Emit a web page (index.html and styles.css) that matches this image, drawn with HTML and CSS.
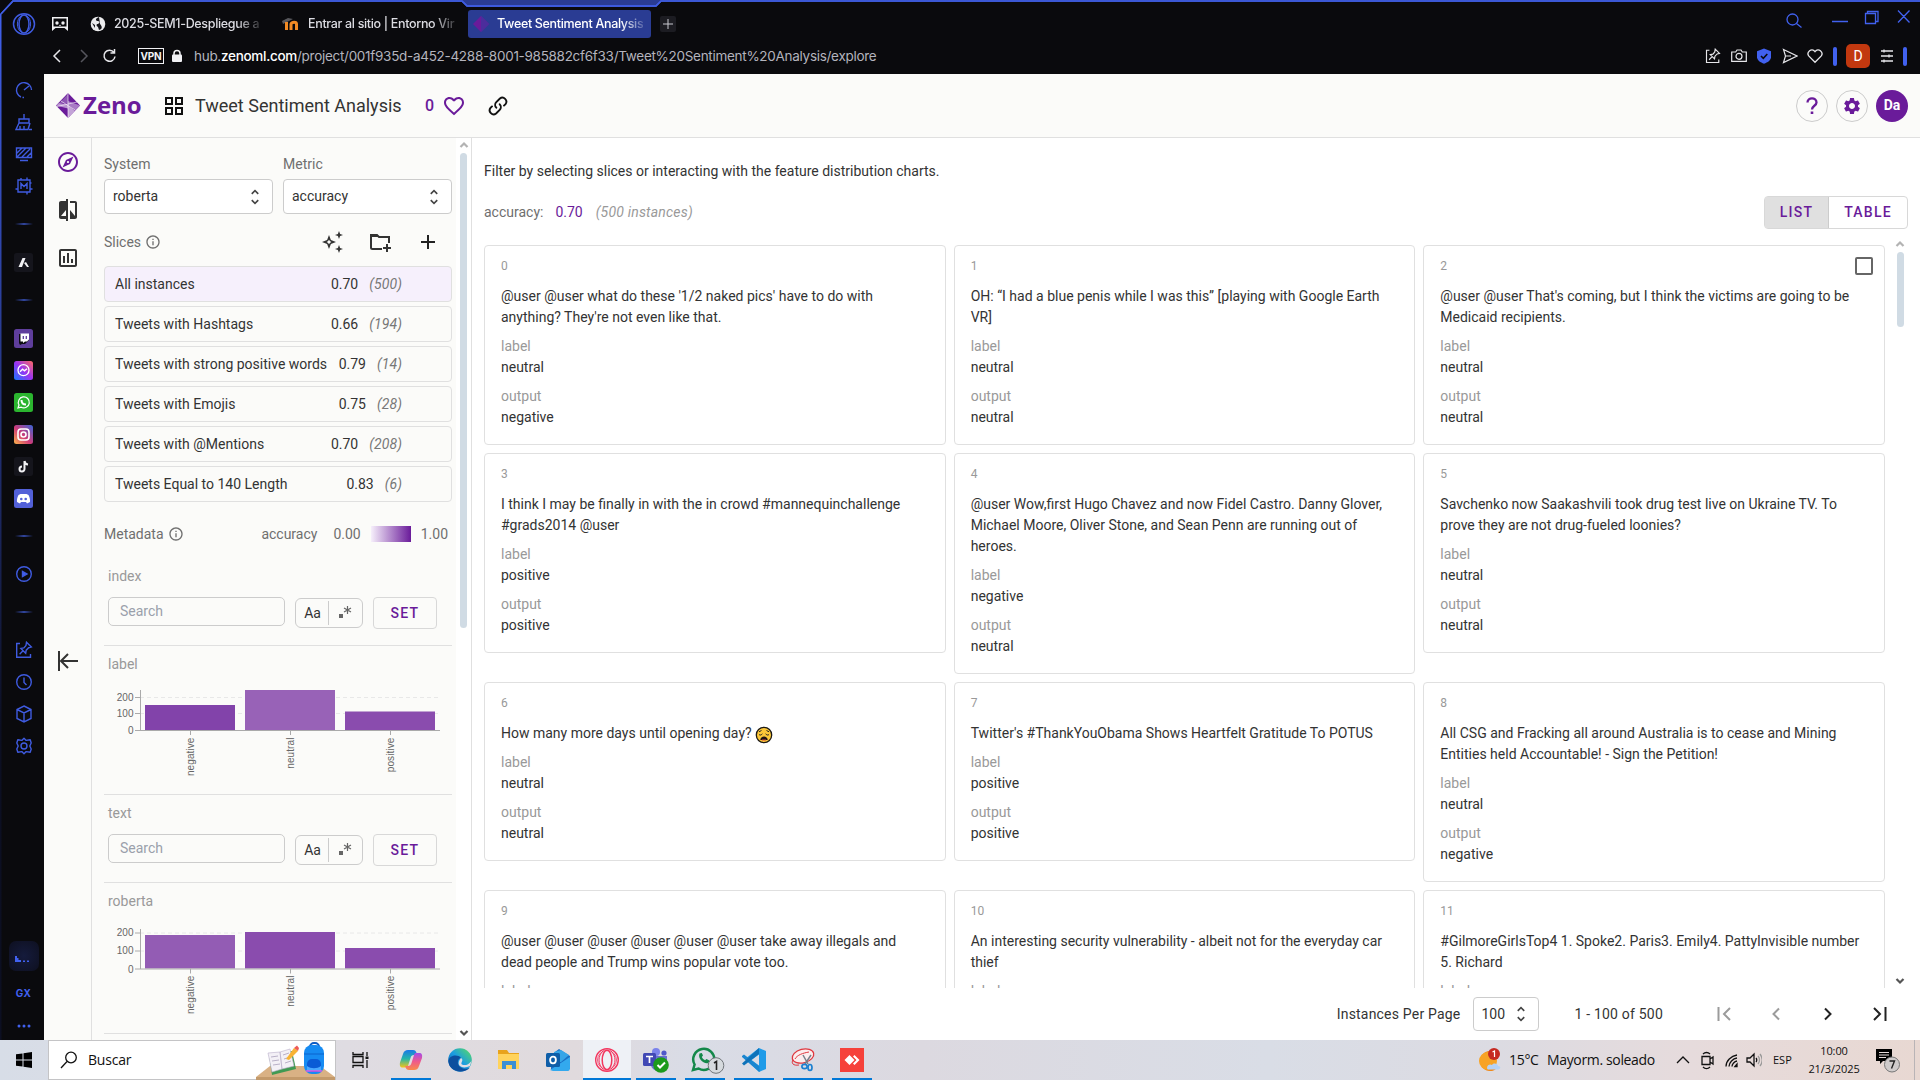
FILE: index.html
```html
<!DOCTYPE html>
<html lang="en">
<head>
<meta charset="utf-8">
<title>Tweet Sentiment Analysis</title>
<link rel="stylesheet" href="styles.css">
</head>
<body>
<svg width="0" height="0" class="defs">
  <defs>
    <symbol id="unfold" viewBox="0 0 24 24"><path d="M12 5.83L15.17 9l1.41-1.41L12 3 7.41 7.59 8.83 9 12 5.83zm0 12.34L8.83 15l-1.41 1.41L12 21l4.59-4.59L15.17 15 12 18.17z"/></symbol>
    <symbol id="info" viewBox="0 0 24 24"><path d="M11 7h2v2h-2zm0 4h2v6h-2zm1-9C6.48 2 2 6.48 2 12s4.48 10 10 10 10-4.48 10-10S17.52 2 12 2zm0 18c-4.41 0-8-3.59-8-8s3.59-8 8-8 8 3.59 8 8-3.59 8-8 8z"/></symbol>
    <symbol id="heart" viewBox="0 0 24 24"><path d="M16.5 3c-1.74 0-3.41.81-4.5 2.09C10.91 3.81 9.24 3 7.5 3 4.42 3 2 5.42 2 8.5c0 3.78 3.4 6.86 8.55 11.54L12 21.35l1.45-1.32C18.6 15.36 22 12.28 22 8.5 22 5.42 19.58 3 16.5 3zm-4.4 15.55l-.1.1-.1-.1C7.14 14.24 4 11.39 4 8.5 4 6.5 5.5 5 7.5 5c1.54 0 3.04.99 3.57 2.36h1.87C13.46 5.99 14.96 5 16.5 5c2 0 3.5 1.5 3.5 3.5 0 2.89-3.14 5.74-7.9 10.05z"/></symbol>
    <symbol id="pin" viewBox="0 0 18 18"><path d="M5 2.5H1.7v13.8h13.8V13M11.5 1.2l4.8 4.8-2.6.7-2.5 2.5-.5 3L5.9 7.4l3-.5 2.1-2.5zM8 9.8l-3.4 3.4"/></symbol>
    <linearGradient id="frame" x1="0" y1="0" x2="0" y2="1"><stop offset="0" stop-color="#4161ef"/><stop offset=".7" stop-color="#0c0f22"/></linearGradient>
    <linearGradient id="insta" x1="0" y1="1" x2="1" y2="0"><stop offset="0" stop-color="#fdb54a"/><stop offset=".45" stop-color="#d13b77"/><stop offset="1" stop-color="#3864d8"/></linearGradient>
    <linearGradient id="msgr" x1="0" y1="1" x2="1" y2="0"><stop offset="0" stop-color="#1878ff"/><stop offset=".5" stop-color="#9a33f2"/><stop offset="1" stop-color="#ff6a62"/></linearGradient>
    <linearGradient id="copA" x1="0" y1="0" x2="0" y2="1"><stop offset="0" stop-color="#1a78e8"/><stop offset=".5" stop-color="#25b6a8"/><stop offset="1" stop-color="#f5c518"/></linearGradient>
    <linearGradient id="copB" x1="0" y1="0" x2="0" y2="1"><stop offset="0" stop-color="#a64be8"/><stop offset=".5" stop-color="#ee5a8c"/><stop offset="1" stop-color="#f98a4a"/></linearGradient>
    <linearGradient id="edge" x1="0" y1="1" x2="1" y2="0"><stop offset="0" stop-color="#0c59a4"/><stop offset=".5" stop-color="#1b9de2"/><stop offset="1" stop-color="#5be05c"/></linearGradient>
  </defs>
</svg>

<div class="browser">
  <svg class="frame" width="1920" height="1040" fill="none">
    <path d="M462 0l6 7h187l6-7z" fill="#2a3c93"/>
    <path d="M.7 1040V14L13 1h449l5 5h189l5-5h1260" stroke="url(#frame)" stroke-width="1.6"/>
    <path d="M0 0h12L0 14z" fill="#0a0a0d"/>
    <path d="M1 14L13 1h449l5 5h189l5-5h1260" stroke="#3f5ce0" stroke-width="1.6"/>
  </svg>
  <div class="tabbar">
    <svg class="opera" width="24" height="24" fill="none" stroke="#3f5be0" stroke-width="1.5"><ellipse cx="12" cy="12" rx="10.5" ry="10.2"/><ellipse cx="12" cy="12" rx="5" ry="9"/><path d="M9.5 3.500C4 7 4 17 9.500 20.500M14.500 3.500C20 7 20 17 14.500 20.500" stroke-width="1"/></svg>
    <svg class="pinned" width="18" height="14" fill="#f1f1f4"><path fill-rule="evenodd" d="M1 0h16v14l-3.500-3h-9L1 14zm1.500 1.500V9.500h13v-8z"/><circle cx="6" cy="6" r="1.700"/><circle cx="12" cy="6" r="1.700"/><path d="M8 9l1-1.500L10 9z"/></svg>
    <div class="tab tab-one"><svg width="16" height="16"><circle cx="8" cy="8" r="7.300" fill="#ececee"/><path d="M9 1c-3 1-4 3-2 4 3 0 3 2 1 3-2 0-2 2 0 3l1 3c4-1 3-4 1-6M2 7l3 2v3z" fill="#15151a"/></svg><span>2025-SEM1-Despliegue a</span></div>
    <div class="tab tab-two"><svg width="18" height="16" fill="none"><path d="M0 5l6-3 5 1-6 3-4 2z" fill="#57575c"/><path d="M4.500 14V6M9 14V8c1-2.500 5.500-2.500 5.500 0v6" stroke="#f28a24" stroke-width="3"/></svg><span>Entrar al sitio | Entorno Vir</span></div>
    <div class="tab tab-active"><svg width="16" height="16"><path d="M8 0l8 8-8 8-8-8z" fill="#6a1b9a"/><path d="M8 0v16l8-8z" fill="#4c2d9c"/></svg><span>Tweet Sentiment Analysis</span></div>
    <div class="newtab"><svg width="10" height="10" stroke="#c8c8d0"><path d="M5 0v10M0 5h10"/></svg></div>
    <svg class="winctl" width="130" height="36" fill="none" stroke="#4161ef" stroke-width="1.300"><circle cx="12.500" cy="18.500" r="5.500"/><path d="M16.500 22.500l5 4M52 20.500h16"/><path d="M85.500 12.500h10v10h-10zM87.500 12.500v-2h10.500v10h-2.500M118 9.500l11.500 12M129.500 9.500l-11.500 12" /></svg>
  </div>
  <div class="address">
    <svg width="82" height="20" fill="none" stroke="#e6e6ea" stroke-width="1.500"><path d="M12 4L6 10l6 6"/><path d="M33 4l6 6-6 6" stroke="#55555d"/><path d="M66 6.500a5.500 5.500 0 1 0 1 4M66.500 3v4h-4"/></svg>
    <span class="vpn">VPN</span>
    <svg class="lock" width="12" height="14"><path d="M3 6V4.500a3 3 0 0 1 6 0V6" fill="none" stroke="#f1f1f4" stroke-width="1.500"/><rect x="1" y="5.500" width="10" height="7.500" rx="1" fill="#f1f1f4"/></svg>
    <span class="url">hub.<b>zenoml.com</b>/project/001f935d-a452-4288-8001-985882cf6f33/Tweet%20Sentiment%20Analysis/explore</span>
    <div class="address-tools">
      <svg width="16" height="16" viewBox="0 0 18 18" fill="none" stroke="#e6e6ea" stroke-width="1.300"><use href="#pin"/></svg>
      <svg width="16" height="16" fill="none" stroke="#e6e6ea" stroke-width="1.200"><path d="M.7 4h4l1.300-2h4l1.300 2h4v9.300H.7z"/><circle cx="8" cy="8.300" r="3"/></svg>
      <svg width="16" height="16"><path d="M8 .5l7 2.800v6c0 3-3.500 5.200-7 6.500-3.500-1.300-7-3.500-7-6.500v-6z" fill="#4161ef"/><path d="M5 8l2.300 2.300L11.300 6" stroke="#0a0a0d" stroke-width="1.600" fill="none"/></svg>
      <svg width="16" height="16" fill="none" stroke="#e6e6ea" stroke-width="1.200"><path d="M1.500 1.500L15 8 1.500 14.500 3.500 8zM3.500 8H9"/></svg>
      <svg width="16" height="16" fill="none" stroke="#e6e6ea" stroke-width="1.300"><path d="M8 14.300L1.700 7.900C-.8 4.500 4.500-.8 8 3.600c3.500-4.400 8.800.9 6.300 4.300z"/></svg>
      <i class="bar"></i><span class="profile">D</span>
      <svg width="14" height="16" fill="none" stroke="#e6e6ea" stroke-width="1.300"><path d="M1 3h12M1 8h12M1 13h12M4 1.500v3M9 6.500v3M4 11.500v3"/></svg>
      <i class="bar"></i>
    </div>
  </div>

  <div class="body">
    <div class="opera-side">
      <div class="si"><svg width="18" height="18"><path d="M6 16A7.500 7.500 0 1 1 16.500 9M9 9l5-4M9 16.500h-1.500"/></svg></div>
      <div class="si"><svg width="18" height="18"><path d="M9 1v5M4 6h10v4H4zM4 10l-3 6.500h12l2-6.500M5 13v3M9 13v3M14 16.500h3"/></svg></div>
      <div class="si"><svg width="18" height="18"><path d="M1.500 3h15v9.500h-15zM5 15.500h8M2 8l5-5M2 12l9-9M7 12l8-8M12 12l4-4"/></svg></div>
      <div class="si"><svg width="18" height="18"><path d="M3 3h12v12H3zM6 3V1M12 3V.5M12 15v2.500M3 12H.5M15 6h1.500M15 12h2.500M6 12V6.500l3 3 3-3V12"/></svg></div>
      <div class="dash"><i></i></div>
      <div class="si"><b class="app dark"><svg width="19" height="19" fill="#f1f1f4"><path d="M8.500 5h3L8 14H4.500zM10 10l2-1 3 5h-2z"/></svg></b></div>
      <div class="dash"><i></i></div>
      <div class="si"><b class="app twitch"><svg width="19" height="19"><path d="M5 5h10v6l-4 4H8l-2 1-1-2z" fill="#0d0d12"/><path d="M6.500 4.500h8.500v6l-2 2h-2l-2 1.500v-1.500H6.500z" fill="#fff"/><path d="M9.300 7v3M12.300 7v3" stroke="#5f3e9c" stroke-width="1.300"/></svg></b></div>
      <div class="si"><b class="app"><svg width="19" height="19"><rect width="19" height="19" rx="2.500" fill="url(#msgr)"/><circle cx="9.500" cy="9.200" r="5.500" fill="none" stroke="#fff" stroke-width="1.300"/><path d="M6 10.700l2.500-2.500 2 1.600L13 7.700" stroke="#fff" fill="none" stroke-width="1.400"/></svg></b></div>
      <div class="si"><b class="app whatsapp"><svg width="19" height="19" fill="none" stroke="#fff" stroke-width="1.200"><path d="M4 15l1-3a5.500 5.500 0 1 1 2.200 2.200z"/><path d="M7.500 7c0 3 1.800 4.600 4.500 4.600" stroke-width="2"/></svg></b></div>
      <div class="si"><b class="app"><svg width="19" height="19" fill="none" stroke="#fff" stroke-width="1.600"><rect width="19" height="19" rx="2.500" fill="url(#insta)" stroke="none"/><rect x="4" y="4" width="11" height="11" rx="3"/><circle cx="9.500" cy="9.500" r="2.500"/></svg></b></div>
      <div class="si"><b class="app dark"><svg width="19" height="19" fill="none" stroke="#f1f1f4" stroke-width="2"><path d="M10.500 4v8a2.500 2.500 0 1 1-2.500-2.500M10.500 4c.3 2 1.500 3.300 3.500 3.500"/></svg></b></div>
      <div class="si"><b class="app discord"><svg width="19" height="19"><path d="M6.500 5h6l2 1c1.500 3 1.700 5 1.500 7l-3 1.500-1-1.500H7l-1 1.500L3 13c-.2-2 0-4 1.500-7z" fill="#fff"/><circle cx="7.300" cy="10" r="1.300" fill="#5260d8"/><circle cx="11.700" cy="10" r="1.300" fill="#5260d8"/></svg></b></div>
      <div class="dash"><i></i></div>
      <div class="si"><svg width="18" height="18"><circle cx="9" cy="9" r="7.300"/><path d="M7.500 6.500v5L12 9z" fill="#4161ef"/></svg></div>
      <div class="dash"><i></i></div>
      <div class="si"><svg width="18" height="18"><use href="#pin"/></svg></div>
      <div class="si"><svg width="18" height="18"><circle cx="9" cy="9" r="7.300"/><path d="M9 4.500v5l2.500 2.500"/></svg></div>
      <div class="si"><svg width="18" height="18"><path d="M9 1l7 3.500v9L9 17l-7-3.500v-9zM2 4.500L9 8l7-3.500M9 8v9"/></svg></div>
      <div class="si"><svg width="18" height="18"><path d="M6.800 3.400L9 1.200l2.200 2.200 4-.6 1 3.200-1.400 3 1.400 3-1 3.200-4-.6L9 16.800l-2.200-2.200-4 .6-1-3.200 1.400-3-1.400-3 1-3.200z" stroke-linejoin="round"/><circle cx="9" cy="9" r="3"/></svg></div>
      <div class="side-foot">
        <div class="glow"><svg width="18" height="18"><path d="M0 9h2v2h1.500v2H6v2H0zM8 13.500h2V15H8zM12 13.500h2V15h-2z" fill="#4161ef" stroke="none"/></svg></div>
        <span class="gx">GX</span>
        <svg width="16" height="6"><g fill="#4161ef" stroke="none"><circle cx="3" cy="3" r="1.500"/><circle cx="8" cy="3" r="1.500"/><circle cx="13" cy="3" r="1.500"/></g></svg>
      </div>
    </div>

    <div class="app-root">
      <header class="top">
        <svg width="24" height="26" viewBox="0 0 24 26"><path d="M12 0l12 12.500L12 25 0 12.500z" fill="#6a1b9a"/><path d="M12 1L3 10.500h9z" fill="#8e55b4"/><path d="M12 12l-9-2-3 2.500 12 3z" fill="#b993d0"/><path d="M12 8l12 4.500-5 5L12 12z" fill="#a97bc5"/><path d="M12 25l7-7-7-6z" fill="#c3a3d7"/><path d="M12 0v25M1 13.500L21 9M5 8l14 9" stroke="#fff" stroke-width=".6"/></svg>
        <span class="brand">Zeno</span>
        <svg class="apps" width="18" height="18" fill="none" stroke="#111" stroke-width="2"><path d="M1 1h6v6H1zM11 1h6v6h-6zM1 11h6v6H1zM11 11h6v6h-6z"/></svg>
        <h1>Tweet Sentiment Analysis</h1>
        <span class="likes">0</span>
        <svg class="like" width="24" height="24" fill="#6a1b9a"><use href="#heart"/></svg>
        <svg class="link" width="20" height="20" fill="none" stroke="#111" stroke-width="1.900" stroke-linecap="round"><path d="M8.300 11.700a4 4 0 0 1 0-5.600l3.600-3.600a4 4 0 0 1 5.600 5.600l-1.500 1.500M11.700 8.300a4 4 0 0 1 0 5.600l-3.600 3.600a4 4 0 0 1-5.600-5.600L4 10.400"/></svg>
        <div class="top-actions">
          <span class="round"><svg width="14" height="20" fill="none" stroke="#6a1b9a" stroke-width="2.300"><path d="M2.500 6.500c0-5.500 9-5.500 9 0 0 3.300-4.500 3.300-4.500 7"/><path d="M7 15.500v2.500" stroke-width="2.600"/></svg></span>
          <span class="round"><svg width="20" height="20" viewBox="0 0 24 24" fill="#6a1b9a"><path d="M19.140 12.940c.04-.3.060-.61.060-.94 0-.32-.02-.64-.07-.94l2.030-1.580c.18-.14.230-.41.120-.61l-1.920-3.320c-.12-.22-.37-.29-.59-.22l-2.390.96c-.5-.38-1.030-.7-1.620-.94l-.36-2.540c-.04-.24-.24-.41-.48-.41h-3.840c-.24 0-.43.170-.47.410l-.36 2.540c-.59.240-1.130.57-1.620.94l-2.390-.96c-.22-.08-.47 0-.59.220L2.740 8.870c-.12.210-.08.470.12.610l2.030 1.580c-.05.3-.09.630-.09.940s.02.640.07.940l-2.030 1.580c-.18.140-.23.410-.12.610l1.920 3.320c.12.220.37.290.59.220l2.390-.96c.5.380 1.030.7 1.620.940l.36 2.540c.05.240.24.410.48.410h3.840c.24 0 .44-.17.470-.41l.36-2.540c.59-.24 1.130-.56 1.620-.94l2.390.96c.22.080.47 0 .59-.22l1.920-3.320c.12-.22.070-.47-.12-.61l-2.010-1.580zM12 15.600c-1.980 0-3.600-1.620-3.600-3.600s1.620-3.600 3.600-3.600 3.600 1.620 3.600 3.600-1.620 3.600-3.600 3.600z"/></svg></span>
          <span class="round user">Da</span>
        </div>
      </header>

      <div class="work">
        <nav class="rail">
          <svg width="24" height="24" fill="#6a1b9a"><path d="M12 2C6.480 2 2 6.480 2 12s4.480 10 10 10 10-4.480 10-10S17.520 2 12 2zm0 18c-4.410 0-8-3.590-8-8s3.590-8 8-8 8 3.590 8 8-3.590 8-8 8zm-5.500-2.500l7.510-3.490L17.500 6.500 9.990 9.990 6.500 17.500zm5.500-6.600c.61 0 1.100.49 1.100 1.100s-.49 1.100-1.100 1.100-1.100-.49-1.100-1.100.49-1.100 1.100-1.100z"/></svg>
          <svg width="24" height="24" fill="#333"><path d="M10 3H5c-1.100 0-2 .9-2 2v14c0 1.100.9 2 2 2h5v2h2V1h-2v2zm0 15H5l5-6v6zm9-15h-5v2h5v13l-5-6v9h5c1.100 0 2-.9 2-2V5c0-1.100-.9-2-2-2z"/></svg>
          <svg width="24" height="24" fill="#333"><path d="M9 17H7v-7h2v7zm4 0h-2V7h2v10zm4 0h-2v-4h2v4zm2 2H5V5h14v14zm0-16H5c-1.100 0-2 .9-2 2v14c0 1.100.9 2 2 2h14c1.100 0 2-.9 2-2V5c0-1.100-.9-2-2-2z"/></svg>
          <svg class="collapse" width="22" height="20" fill="none" stroke="#333" stroke-width="2"><path d="M2 0v20M21 10H4M11 3l-7 7 7 7"/></svg>
        </nav>

        <aside class="panel">
          <div class="selects">
            <label>System<span class="select">roberta<svg width="20" height="20"><use href="#unfold"/></svg></span></label>
            <label>Metric<span class="select">accuracy<svg width="20" height="20"><use href="#unfold"/></svg></span></label>
          </div>
          <div class="slices-head">
            <span>Slices</span><svg class="inf" width="16" height="16"><use href="#info"/></svg>
            <div class="slice-tools">
              <svg width="24" height="24" fill="#333"><path fill-rule="evenodd" d="M9 5l1.900 5.100 5.100 1.900-5.100 1.900L9 19l-1.900-5.100L2 12l5.100-1.900zm0 4.700l-.9 1.400-1.400.9 1.400.9.9 1.400.9-1.400 1.400-.9-1.400-.9zM19 1l1.100 2.900L23 5l-2.900 1.100L19 9l-1.100-2.900L15 5l2.900-1.100zM19 15l1.100 2.900L23 19l-2.900 1.100L19 23l-1.100-2.900L15 19l2.900-1.100z"/></svg>
              <svg width="24" height="24" fill="none" stroke="#333" stroke-width="2"><path d="M14 19H4.500C3.500 19 3 18.500 3 17.500V5h6l2 2h10v6M3 6h7M19 14v8M15 18h8"/></svg>
              <svg width="24" height="24" fill="none" stroke="#222" stroke-width="2"><path d="M12 5v14M5 12h14"/></svg>
            </div>
          </div>
          <ul class="slices">
            <li class="on"><span>All instances</span><b>0.70</b><i>(500)</i></li>
            <li><span>Tweets with Hashtags</span><b>0.66</b><i>(194)</i></li>
            <li><span>Tweets with strong positive words</span><b>0.79</b><i>(14)</i></li>
            <li><span>Tweets with Emojis</span><b>0.75</b><i>(28)</i></li>
            <li><span>Tweets with @Mentions</span><b>0.70</b><i>(208)</i></li>
            <li><span>Tweets Equal to 140 Length</span><b>0.83</b><i>(6)</i></li>
          </ul>
          <div class="meta-head"><span>Metadata</span><svg class="inf" width="16" height="16"><use href="#info"/></svg><span class="acc">accuracy</span><span class="lo">0.00</span><i class="ramp"></i><span>1.00</span></div>

          <section class="field field-search">
            <h2>index</h2>
            <div class="search-row"><span class="search">Search</span><span class="modes"><b>Aa</b><svg width="33" height="24"><path d="M10 13h4v4h-4z" fill="#666"/><path d="M18.500 5v8M15 7l7 4M22 7l-7 4" stroke="#666" stroke-width="1.200"/></svg></span><span class="set">SET</span></div>
          </section>
          <section class="field field-chart">
            <h2>label</h2>
            <svg class="chart" width="340" height="104">
              <path d="M36 17.500h300M36 33.500h300" class="grid"/>
              <path d="M41 25h90v25H41z" fill="#8243aa"/><path d="M141 10h90v40h-90z" fill="#9862b7"/><path d="M241 31.500h90V50h-90z" fill="#8a4cae"/>
              <path d="M36.500 10v40.500M31 17.500h5M31 33.500h5M31 50.500h305M86.500 50v5M186.500 50v5M286.500 50v5" class="axis"/>
              <g class="tick"><text x="29.500" y="20.500">200</text><text x="29.500" y="37">100</text><text x="29.500" y="54">0</text>
              <text class="cat" transform="translate(90 57.500)rotate(-90)">negative</text><text class="cat" transform="translate(190 57.500)rotate(-90)">neutral</text><text class="cat" transform="translate(290 57.500)rotate(-90)">positive</text></g>
            </svg>
          </section>
          <section class="field field-search">
            <h2>text</h2>
            <div class="search-row"><span class="search">Search</span><span class="modes"><b>Aa</b><svg width="33" height="24"><path d="M10 13h4v4h-4z" fill="#666"/><path d="M18.500 5v8M15 7l7 4M22 7l-7 4" stroke="#666" stroke-width="1.200"/></svg></span><span class="set">SET</span></div>
          </section>
          <section class="field field-chart">
            <h2>roberta</h2>
            <svg class="chart" width="340" height="104">
              <path d="M36 16h300M36 34h300" class="grid"/>
              <path d="M41 18h90v33.500H41z" fill="#935cb4"/><path d="M141 15h90v36.500h-90z" fill="#8a4cae"/><path d="M241 31h90v20.500h-90z" fill="#8a4cae"/>
              <path d="M36.500 12v40M31 16h5M31 34h5M31 52h305M86.500 51.500v5M186.500 51.500v5M286.500 51.500v5" class="axis"/>
              <g class="tick"><text x="29.500" y="19">200</text><text x="29.500" y="37">100</text><text x="29.500" y="56">0</text>
              <text class="cat" transform="translate(90 58.500)rotate(-90)">negative</text><text class="cat" transform="translate(190 58.500)rotate(-90)">neutral</text><text class="cat" transform="translate(290 58.500)rotate(-90)">positive</text></g>
            </svg>
          </section>
        </aside>
        <div class="scroll scroll-panel"><svg width="10" height="8" fill="none" stroke="#b3b3b3" stroke-width="2.200"><path d="M1.500 6L5 2.500 8.500 6"/></svg><i></i><svg width="10" height="8" fill="none" stroke="#555" stroke-width="2.200"><path d="M1.500 2L5 5.500 8.500 2"/></svg></div>

        <main class="main">
          <p class="hint">Filter by selecting slices or interacting with the feature distribution charts.</p>
          <div class="summary"><span>accuracy:</span><b>0.70</b><i>(500 instances)</i><div class="toggle"><span class="on">LIST</span><span>TABLE</span></div></div>
          <div class="list-wrap">
            <div class="cards">
              <article><h3>0</h3><p>@user @user what do these '1/2 naked pics' have to do with anything? They're not even like that.</p><dl><dt>label</dt><dd>neutral</dd><dt>output</dt><dd>negative</dd></dl></article>
              <article><h3>1</h3><p>OH: “I had a blue penis while I was this” [playing with Google Earth VR]</p><dl><dt>label</dt><dd>neutral</dd><dt>output</dt><dd>neutral</dd></dl></article>
              <article><h3>2<i class="check"></i></h3><p>@user @user That's coming, but I think the victims are going to be Medicaid recipients.</p><dl><dt>label</dt><dd>neutral</dd><dt>output</dt><dd>neutral</dd></dl></article>
              <article><h3>3</h3><p>I think I may be finally in with the in crowd #mannequinchallenge #grads2014 @user</p><dl><dt>label</dt><dd>positive</dd><dt>output</dt><dd>positive</dd></dl></article>
              <article><h3>4</h3><p>@user Wow,first Hugo Chavez and now Fidel Castro. Danny Glover, Michael Moore, Oliver Stone, and Sean Penn are running out of heroes.</p><dl><dt>label</dt><dd>negative</dd><dt>output</dt><dd>neutral</dd></dl></article>
              <article><h3>5</h3><p>Savchenko now Saakashvili took drug test live on Ukraine TV. To prove they are not drug-fueled loonies?</p><dl><dt>label</dt><dd>neutral</dd><dt>output</dt><dd>neutral</dd></dl></article>
              <article><h3>6</h3><p>How many more days until opening day? <svg class="emoji" width="18" height="18"><circle cx="9" cy="9" r="7.700" fill="#fcc838" stroke="#1d1a16" stroke-width="1.300"/><path d="M4 8.500c1 .8 2.500.8 3.300-.8M14 8.500c-1 .8-2.500.8-3.300-.8M4 5.800l2.500-1.300M14 5.800l-2.500-1.300" stroke="#222" fill="none"/><path d="M5.300 14c0-4.800 7.400-4.800 7.400 0z" fill="#1d1414"/><path d="M7 13.500h4v1H7z" fill="#d8453e"/></svg></p><dl><dt>label</dt><dd>neutral</dd><dt>output</dt><dd>neutral</dd></dl></article>
              <article><h3>7</h3><p>Twitter's #ThankYouObama Shows Heartfelt Gratitude To POTUS</p><dl><dt>label</dt><dd>positive</dd><dt>output</dt><dd>positive</dd></dl></article>
              <article><h3>8</h3><p>All CSG and Fracking all around Australia is to cease and Mining Entities held Accountable! - Sign the Petition!</p><dl><dt>label</dt><dd>neutral</dd><dt>output</dt><dd>negative</dd></dl></article>
              <article><h3>9</h3><p>@user @user @user @user @user @user take away illegals and dead people and Trump wins popular vote too.</p><dl><dt>label</dt></dl></article>
              <article><h3>10</h3><p>An interesting security vulnerability - albeit not for the everyday car thief</p><dl><dt>label</dt></dl></article>
              <article><h3>11</h3><p>#GilmoreGirlsTop4 1. Spoke2. Paris3. Emily4. PattyInvisible number 5. Richard</p><dl><dt>label</dt></dl></article>
            </div>
            <div class="scroll scroll-list"><svg width="10" height="8" fill="none" stroke="#b3b3b3" stroke-width="2.200"><path d="M1.500 6L5 2.500 8.500 6"/></svg><i></i><svg width="10" height="8" fill="none" stroke="#555" stroke-width="2.200"><path d="M1.500 2L5 5.500 8.500 2"/></svg></div>
          </div>
          <div class="pager">
            <span class="ipp">Instances Per Page</span>
            <span class="select small">100<svg width="20" height="20"><use href="#unfold"/></svg></span>
            <span class="range">1 - 100 of 500</span>
            <svg width="14" height="14" fill="none" stroke="#9b9b9b" stroke-width="2"><path d="M1.500 0v14M13 1L7 7l6 6"/></svg>
            <svg width="14" height="14" fill="none" stroke="#9b9b9b" stroke-width="2"><path d="M10 1.500L4.500 7l5.500 5.500"/></svg>
            <svg width="14" height="14" fill="none" stroke="#222" stroke-width="2"><path d="M4 1.500L9.500 7 4 12.500"/></svg>
            <svg width="14" height="14" fill="none" stroke="#222" stroke-width="2"><path d="M12.500 0v14M1 1l6 6-6 6"/></svg>
          </div>
        </main>
      </div>
    </div>
  </div>
</div>

<footer class="taskbar">
  <div class="start"><svg width="16" height="16"><path d="M0 2.300L6.500 1.400V7.500H0zM7.500 1.200L16 0v7.500H7.500zM0 8.500h6.500v6.100L0 13.700zM7.500 8.500H16V16l-8.500-1.200z"/></svg></div>
  <div class="search-box">
    <svg width="18" height="18" fill="none" stroke="#111" stroke-width="1.300"><circle cx="11" cy="6.500" r="5.300"/><path d="M7 10.500L1 17"/></svg><span>Buscar</span>
    <svg class="doodle" width="79" height="40"><path d="M0 37l14-11h50l15 11v3H0z" fill="#d9b184"/><path d="M0 37h79v3H0z" fill="#c39a6b"/><path d="M13 15l23-4 4 18-24 6z" fill="#3f9a52"/><path d="M12 13l12-1 2 17-10 3zM24 12l10-3 4 17-12 3z" fill="#f3f0f6" stroke="#b9aeca" stroke-width=".6"/><path d="M15 17l7-1M16 21l7-1M17 25l7-1M27 15l6-2M28 19l6-2M29 23l6-2" stroke="#aaa0bb" stroke-width=".8"/><path d="M30 19L38 8l4 3-9 9z" fill="#f8b334"/><path d="M38 8l3-2.500L43 8l-1 3z" fill="#ee5b56"/><rect x="54" y="3" width="9" height="8" rx="4" fill="none" stroke="#0d5cc4" stroke-width="2"/><rect x="48" y="5" width="20" height="29" rx="8" fill="#168bf2"/><path d="M48 14h20" stroke="#0b63cd"/><rect x="51" y="19" width="14" height="13" rx="5" fill="#0a5bd6"/><path d="M51 26c4 3 10 3 14 0v5H51z" fill="#49a7ff"/><path d="M50 31h16" stroke="#d85be8" stroke-width="1.500"/></svg>
  </div>
  <div class="tb view"><svg width="18" height="18" fill="none" stroke="#111" stroke-width="1.300"><path d="M2 1v2.500h10V1M2 5.500h10v6H2zM2 17v-2.500h10V17M16 1v4M16 9v8"/><path d="M14.500 5.500h3v2.500h-3z" fill="#111" stroke="none"/></svg></div>
  <div class="tb run"><svg width="24" height="24"><path d="M9 2h5c2 0 3 1 3.500 3l.5 2h-3c-2 0-3 1-3.500 3L9 18c-.5 1-1 1.500-2 1.500H4c-3 0-3.500-2-3-5L4 6c1-3 2.500-4 5-4z" fill="url(#copA)"/><path d="M15 22h-5c-2 0-3-1-3.500-3L6 18h3c2 0 3-1 3.500-3L15 7c.5-1.500 1-2 2-2h3c3 0 3.500 2 3 5l-3 8c-1 3-2.500 4-5 4z" fill="url(#copB)"/></svg></div>
  <div class="tb"><svg width="26" height="26"><circle cx="13" cy="13" r="11.800" fill="url(#edge)"/><path d="M1.300 14C2.500 8 11 7 14 11c-4 1-4 6-1 9 3 2.500 7 2 10 .5C18 27 2.500 26 1.300 14z" fill="#0d4f9e"/><path d="M14 11c3 2 0 4 .5 6 1.500 2 7 1.500 10-3l-1.500 5c-4 2-9 2-11-1-1-2 0-5 2-7z" fill="#e0dde5"/></svg></div>
  <div class="tb"><svg width="24" height="22"><path d="M1 1h9l2 3h10v6H1z" fill="#e8a31c"/><path d="M1 5h21v15H1z" fill="#ffd35c"/><path d="M5 12h14v8h-4v-4H9v4H5z" fill="#3b8fd5"/></svg></div>
  <div class="tb"><svg width="26" height="24"><path d="M6 7l8-6 11 7v13H6z" fill="#1a6fc4"/><path d="M9 4l7-2 8 5-8 7H9z" fill="#35a5e8"/><path d="M5 22l20-13v11c0 2-1 3-2 3H8z" fill="#33a9ee"/><rect x="1" y="5" width="14" height="14" rx="1.500" fill="#0f5ea8"/><ellipse cx="8" cy="12" rx="2.900" ry="3.300" fill="none" stroke="#fff" stroke-width="1.800"/></svg></div>
  <div class="tb run wide"><svg width="26" height="26" fill="none" stroke="#f3365e"><circle cx="13" cy="13" r="11.300" stroke-width="1.400"/><circle cx="13" cy="13" r="9.500" stroke-width=".8"/><ellipse cx="13" cy="13" rx="4.800" ry="9.800" stroke-width="1.500"/><path d="M9.500 3.500c-6 5-6 14 0 19M16.500 3.500c6 5 6 14 0 19" stroke-width="1"/></svg></div>
  <div class="tb run"><svg width="28" height="26"><circle cx="14" cy="5" r="4" fill="#7b83eb"/><circle cx="22" cy="6" r="2.600" fill="#5059c9"/><path d="M9 9h16v9c0 4-4 6-8 6s-8-3-8-6z" fill="#6a71d2"/><rect x="1" y="6" width="13" height="13" rx="1.500" fill="#4148b4"/><path d="M4 9.500h7M7.500 9.500V16" stroke="#fff" stroke-width="1.700"/><circle cx="19" cy="18" r="7.800" fill="#1c9a1c"/><path d="M15.500 18l2.500 2.500 5-5" stroke="#fff" stroke-width="2" fill="none"/></svg></div>
  <div class="tb run"><svg class="wa" width="34" height="28"><path d="M2 24l1.600-5.500a10.500 10.500 0 1 1 4 4z" fill="none" stroke="#14884a" stroke-width="2.500"/><path d="M8.500 7.500c-2 5 4 11 9 9.500l1-2.500-3-1.500-1.500 1.200c-1.500-.7-2.500-1.700-3.200-3.200L12 9.500 10.800 7z" fill="#14884a"/><circle cx="25" cy="19.500" r="7.800" fill="#d6dade" stroke="#70757a"/><path d="M23 17l2.500-1.500v8.500" stroke="#222" stroke-width="1.600" fill="none"/></svg></div>
  <div class="tb run"><svg width="24" height="24"><path d="M17 0l7 3v18l-7 3L3 11z" fill="#1f9be8"/><path d="M17 6.500v11L9.500 12z" fill="#dcdce4"/><path d="M0 8l2-1.500L17.500 18.500V24L0 9z" fill="#1a86d0"/><path d="M0 15.500L17 0v6L2 17.500z" fill="#0e72b9"/></svg></div>
  <div class="tb run"><svg width="26" height="26" fill="none"><ellipse cx="13" cy="9" rx="11" ry="6.800" transform="rotate(-15 13 9)" fill="#fbeeee" stroke="#e0383f" stroke-width="1.300"/><path d="M3 13c-2 3 0 6 6 5M5 12c2-4 8-6 14-7" stroke="#e0383f"/><path d="M13 8l5 9M21 8l-6 9" stroke="#77808a" stroke-width="1.500"/><ellipse cx="14.500" cy="19.500" rx="2.600" ry="2.200" stroke="#1b80d0" stroke-width="1.700"/><ellipse cx="20" cy="20.500" rx="2" ry="3" stroke="#1b80d0" stroke-width="1.700"/></svg></div>
  <div class="tb run"><svg width="24" height="24"><path d="M0 0h24v24H0z" fill="#f6413a"/><path d="M9.500 7l5 5-5 5-5-5zM13 8.500L14.500 7l5 5-5 5-1.500-1.500 3.500-3.500z" fill="#fff"/></svg></div>
  <div class="tray">
    <svg class="weather" width="24" height="26"><path d="M12 4A10 10 0 1 0 20 20C11 19 9 11 12 4z" fill="#ef8a1d"/><circle cx="10" cy="14" r="9" fill="#f7a325"/><path d="M9 21c0-4 4-4 5-3 2-3 6-1 6 1 3 0 3 3 0 3.500h-9c-1 0-2-.5-2-1.500z" fill="#b5d2f5"/><circle cx="16" cy="7" r="6" fill="#c62a22"/><path d="M14.500 5l2-1v6" stroke="#fff" stroke-width="1.200" fill="none"/></svg>
    <span class="temp">15°C</span><span class="sky">Mayorm. soleado</span>
    <svg class="icons" width="86" height="20" fill="none" stroke="#111" stroke-width="1.300"><path d="M1 13l6-6 6 6"/><path d="M26 6.500h8v8h-8zM34 9l3-2v7l-3-2M27 4c2-2 5-2 7 0M27 17c2 2 5 2 7 0"/><path d="M50 16.500C50 11 55 6 61 5M53 16.500c0-4 4-8 8-8.500M56 16.500c0-2.500 2.500-5 5-5.500M59 16.500l2-2.500v2.500z"/><path d="M71 8h3l4-4v12l-4-4h-3zM80 8c1 1 1 3 0 4"/><path d="M82 6c2 2 2 6 0 8M84 4c3 4 3 8 0 12" stroke="#999"/></svg>
    <span class="lang">ESP</span>
    <span class="clock">10:00<br>21/3/2025</span>
    <svg class="notif" width="26" height="26"><path d="M1 2h16v12H8l-3 3v-3H1z"/><path d="M4 5.500h10M4 8h10M4 10.500h7" stroke="#e6dcdc" stroke-width="1.100"/><circle cx="17" cy="17.500" r="7.500" fill="#cfcbcb" stroke="#777"/><path d="M14.500 14h5l-3 7.500" fill="none" stroke="#222" stroke-width="1.400"/></svg>
    <i class="peek"></i>
  </div>
</footer>
</body>
</html>
```
FILE: styles.css
```css
* { box-sizing: border-box; margin: 0; padding: 0; }
body { width: 1920px; height: 1080px; overflow: hidden; display: flex; flex-direction: column; font: 14px/21px Roboto, sans-serif; color: #333; background: #fff; }
svg { flex: none; display: block; }
.defs { position: absolute; }
h1, h2, h3 { font-weight: 400; }
b { font-weight: 400; }

.browser { position: relative; height: 1040px; display: flex; flex-direction: column; background: #0a0a0d; }
.frame { position: absolute; top: 0; left: 0; pointer-events: none; }
.tabbar { height: 38px; padding: 10px 10px 0 12px; display: flex; align-items: center; font: 500 12.5px/28px Inter, sans-serif; letter-spacing: -.33px; color: #dcdce2; }
.opera { margin-right: 15px; }
.pinned { margin-right: 21px; }
.tab { display: flex; align-items: center; gap: 8px; height: 28px; white-space: nowrap; }
.tab span { flex: 1; -webkit-mask-image: linear-gradient(90deg, #000 85%, transparent 104%); mask-image: linear-gradient(90deg, #000 85%, transparent 104%); }
.tab-one { width: 169px; margin-right: 23px; }
.tab-two { width: 173px; margin-right: 13px; }
.tab-active { width: 183px; padding: 0 8px 0 5px; background: #2a3c93; border-radius: 3px; color: #fff; }
.newtab { width: 16px; height: 16px; margin-left: 9px; border-radius: 2px; background: #1c1c22; display: grid; place-items: center; }
.winctl { margin: -10px 0 0 auto; }
.address { height: 36px; padding: 0 13px 0 48px; display: flex; align-items: center; }
.vpn { width: 26px; height: 16px; margin-left: 8px; border: 1.5px solid #f1f1f4; font: 700 10px/14px Inter, sans-serif; text-align: center; color: #f1f1f4; letter-spacing: -.2px; }
.lock { margin: 0 11px 0 7px; }
.url { font: 400 13.5px/20px Inter, sans-serif; letter-spacing: -.29px; color: #b4b4bd; white-space: nowrap; }
.url b { color: #fff; font-weight: 500; }
.address-tools { margin-left: auto; display: flex; align-items: center; gap: 9.5px; }
.bar { width: 4px; height: 19px; border-radius: 2px; background: #4161ef; }
.profile { width: 24px; height: 24px; border-radius: 5px; background: #c2380f; color: #fff; font: 14px/24px Roboto, sans-serif; text-align: center; }

.body { flex: 1; display: flex; min-height: 0; }
.opera-side { width: 44px; padding-left: 3px; display: flex; flex-direction: column; align-items: center; }
.si { height: 32px; display: grid; place-items: center; }
.si > svg { fill: none; stroke: #3f5be0; stroke-width: 1.4; }
.app { display: block; width: 19px; height: 19px; border-radius: 2.5px; }
.app.dark { background: #15151c; }
.twitch { background: #5f3e9c; }
.whatsapp { background: #2bb52f; }
.discord { background: #5260d8; }
.dash { height: 44px; display: grid; place-items: center; }
.dash i { width: 18px; height: 2px; background: linear-gradient(90deg, transparent, #31469f, transparent); }
.side-foot { margin-top: auto; height: 99px; display: flex; flex-direction: column; align-items: center; }
.glow { width: 30px; height: 30px; border-radius: 7px; background: radial-gradient(#151b3c, #0e1020); display: grid; place-items: center; }
.gx { height: 24px; margin: 10px 0 18px; font: 700 10px/24px Inter, sans-serif; color: #4161ef; letter-spacing: .3px; }

.app-root { flex: 1; display: flex; flex-direction: column; background: #fff; min-width: 0; }
.top { height: 64px; padding: 0 12px; display: flex; align-items: center; background: #fbfbf9; border-bottom: 1px solid #e0e0e0; }
.brand { width: 60px; margin-left: 3px; padding-bottom: 2px; font: 700 24px/30px "Open Sans", sans-serif; color: #6a1b9a; }
.apps { margin: 0 12px 0 22px; }
h1 { width: 229px; font-size: 18px; line-height: 30px; white-space: nowrap; }
.likes { width: 18px; margin-left: 1px; font-size: 16px; font-weight: 500; color: #6a1b9a; }
.like { margin-left: -1px; }
.link { margin-left: 22px; }
.top-actions { margin-left: auto; display: flex; gap: 8px; }
.round { width: 32px; height: 32px; border: 1px solid #ccc; border-radius: 50%; display: grid; place-items: center; }
.user { background: #6a1b9a; border: 0; color: #fff; font-weight: 700; }

.work { flex: 1; display: flex; min-height: 0; }
.rail { width: 48px; padding: 12px 0; border-right: 1px solid #e0e0e0; background: #fbfbf9; display: flex; flex-direction: column; align-items: center; gap: 24px; }
.collapse { margin-top: 357px; }
.panel { width: 364px; padding: 16px 4px 0 12px; background: #fbfbf9; overflow: hidden; color: #6f6f6f; display: flex; flex-direction: column; }
.panel > * { flex: none; }
.selects { display: flex; gap: 10px; }
.selects label { flex: 1; }
.select { display: flex; align-items: center; justify-content: space-between; height: 35px; margin-top: 4px; padding: 0 7px 0 8px; border: 1px solid #ccc; border-radius: 4px; background: #fff; color: #333; }
.select svg { fill: #444; }
.slices-head { display: flex; align-items: center; height: 52px; padding-top: 4px; }
.inf { fill: #6f6f6f; margin-left: 4px; }
.slice-tools { margin-left: auto; padding-right: 12px; display: flex; gap: 24px; }
.slices { list-style: none; display: flex; flex-direction: column; gap: 4px; color: #333; }
.slices li { height: 36px; padding: 0 49px 0 10px; display: flex; align-items: center; border: 1px solid #e0e0e0; border-radius: 4px; white-space: nowrap; }
.slices .on { background: #f6f0fc; }
.slices span { flex: 1; }
.slices i { margin-left: 11px; color: #777; letter-spacing: .1px; }
.meta-head { height: 64px; display: flex; align-items: center; }
.acc { margin-left: auto; }
.lo { margin-left: 16px; }
.ramp { width: 40px; height: 16px; margin: 0 10px; background: linear-gradient(90deg, #f6effb, #6a1b9a); }
.meta-head span:last-child { margin-right: 4px; }
.field { border-bottom: 1px solid #e0e0e0; padding: 8px 0 0 4px; }
.field h2 { font-size: 14px; line-height: 21px; color: #999; }
.field-search { height: 88px; }
.field-search:first-of-type { height: 80px; padding-top: 0; }
.field-chart { height: 149px; }
.field-chart:last-child { height: 151px; }
.search-row { display: flex; align-items: flex-start; margin-top: 10px; }
.search { width: 177px; height: 29px; padding-left: 11px; border: 1px solid #ccc; border-radius: 5px; line-height: 27px; color: #9aa0ab; }
.modes { width: 68px; height: 30px; margin: 1px 10px 0; border: 1px solid #ccc; border-radius: 6px; display: flex; align-items: center; color: #333; }
.modes b { width: 35px; padding-left: 1px; text-align: center; border-right: 1px solid #ccc; line-height: 24px; }
.set { width: 64px; height: 32px; border: 1px solid #d8d8d8; border-radius: 4px; font-weight: 500; line-height: 31px; text-align: center; letter-spacing: 1.25px; color: #6a1b9a; }
.chart { margin: 5px 0 0 -4px; overflow: visible; }
.grid { stroke: #e8e8e8; stroke-dasharray: 4 3; fill: none; }
.axis { stroke: #aaa; fill: none; }
.tick { font: 10px "Liberation Sans", sans-serif; fill: #666; text-anchor: end; }
.cat { letter-spacing: .1px; }

.scroll { display: flex; flex-direction: column; align-items: center; }
.scroll i { width: 7px; border-radius: 4px; background: #d0dbe4; }
.scroll svg:last-child { margin-top: auto; }
.scroll-panel { width: 16px; padding: 3px 0 3px; border-right: 1px solid #e0e0e0; background: #fff; }
.scroll-panel i { height: 475px; margin-top: 4px; }

.main { flex: 1; display: flex; flex-direction: column; padding-left: 12px; min-width: 0; }
.hint { margin-top: 23px; }
.summary { display: flex; align-items: center; height: 33px; margin: 14px 12px 11px 0; color: #6f6f6f; }
.summary b { margin: 0 13px 0 12px; color: #6a1b9a; }
.summary i { color: #999; letter-spacing: .2px; }
.toggle { margin-left: auto; height: 33px; display: flex; border: 1px solid #d8d8d8; border-radius: 4px; font-weight: 500; line-height: 31px; letter-spacing: 1.25px; color: #6a1b9a; }
.toggle span { width: 78px; text-align: center; }
.toggle .on { width: 64px; background: #e0e0e0; border-right: 1px solid #ccc; }
.list-wrap { height: 748px; display: flex; overflow: hidden; }
.cards { width: 1401px; padding-top: 5px; display: grid; grid-template-columns: repeat(3, 1fr); grid-auto-rows: max-content; gap: 8px; align-items: start; }
article { padding: 10px 16px 16px; border: 1px solid #e0e0e0; border-radius: 4px; }
h3 { display: flex; justify-content: space-between; height: 21px; margin-bottom: 9px; font-size: 12px; line-height: 21px; color: #999; }
.check { width: 18px; height: 18px; margin: 1px -5px 0 0; border: 2px solid #666; border-radius: 2px; }
.emoji { display: inline-block; vertical-align: -4px; margin: -2px 0; }
dt { margin-top: 8px; color: #999; }
.scroll-list { width: 10px; margin-left: 10px; padding-bottom: 3px; }
.scroll-list i { height: 75px; margin-top: 4px; }
.pager { height: 52px; padding-right: 33px; display: flex; align-items: center; justify-content: flex-end; }
.ipp { margin-right: 12px; letter-spacing: .2px; }
.small { width: 66px; height: 34px; margin: 0 36px 0 0; }
.range { margin-right: 16px; letter-spacing: .2px; }
.pager > svg { margin-left: 38px; }

.taskbar { height: 40px; display: flex; align-items: stretch; background: linear-gradient(90deg, #d7dde7 0, #dfdce2 18%, #e0dadd 30%, #d9dce6 36%, #dcd9e0 48%, #d9dde6 66%, #dcdbe2 78%, #e6dbdc 88%, #e8d8d2); font: 14px/20px "Open Sans", sans-serif; color: #111; }
.start { width: 48px; display: grid; place-items: center; }
.search-box { width: 288px; padding-left: 11px; display: flex; align-items: center; gap: 10px; background: #fff; border: 1px solid #c4c4c6; font-size: 14px; letter-spacing: -.2px; }
.doodle { margin-left: auto; }
.tb { width: 49px; display: grid; place-items: center; }
.tb.view { width: 50px; padding-right: 2px; }
.run { position: relative; }
.run::after { content: ""; position: absolute; bottom: 0; left: 5px; width: 40px; height: 2px; background: #0078d7; }
.wide { background: linear-gradient(#eef1f6, #eef1f6) center / 48px 100% no-repeat; }
.wide::after { left: .5px; width: 48px; }
.wa { margin-left: 6px; }
.tray { margin-left: auto; padding-right: 5px; display: flex; align-items: center; white-space: nowrap; }
.temp { width: 30px; margin: 0 8px 0 7px; letter-spacing: -.3px; }
.sky { width: 108px; margin-right: 21px; letter-spacing: -.35px; }
.lang { width: 20px; margin: 0 14px 0 11px; font-size: 11px; }
.clock { width: 54px; font-size: 11px; line-height: 18px; text-align: center; letter-spacing: -.1px; }
.notif { margin-left: 14px; }
.peek { width: 1px; height: 40px; margin-left: 13px; background: #b9b4b6; }
```
